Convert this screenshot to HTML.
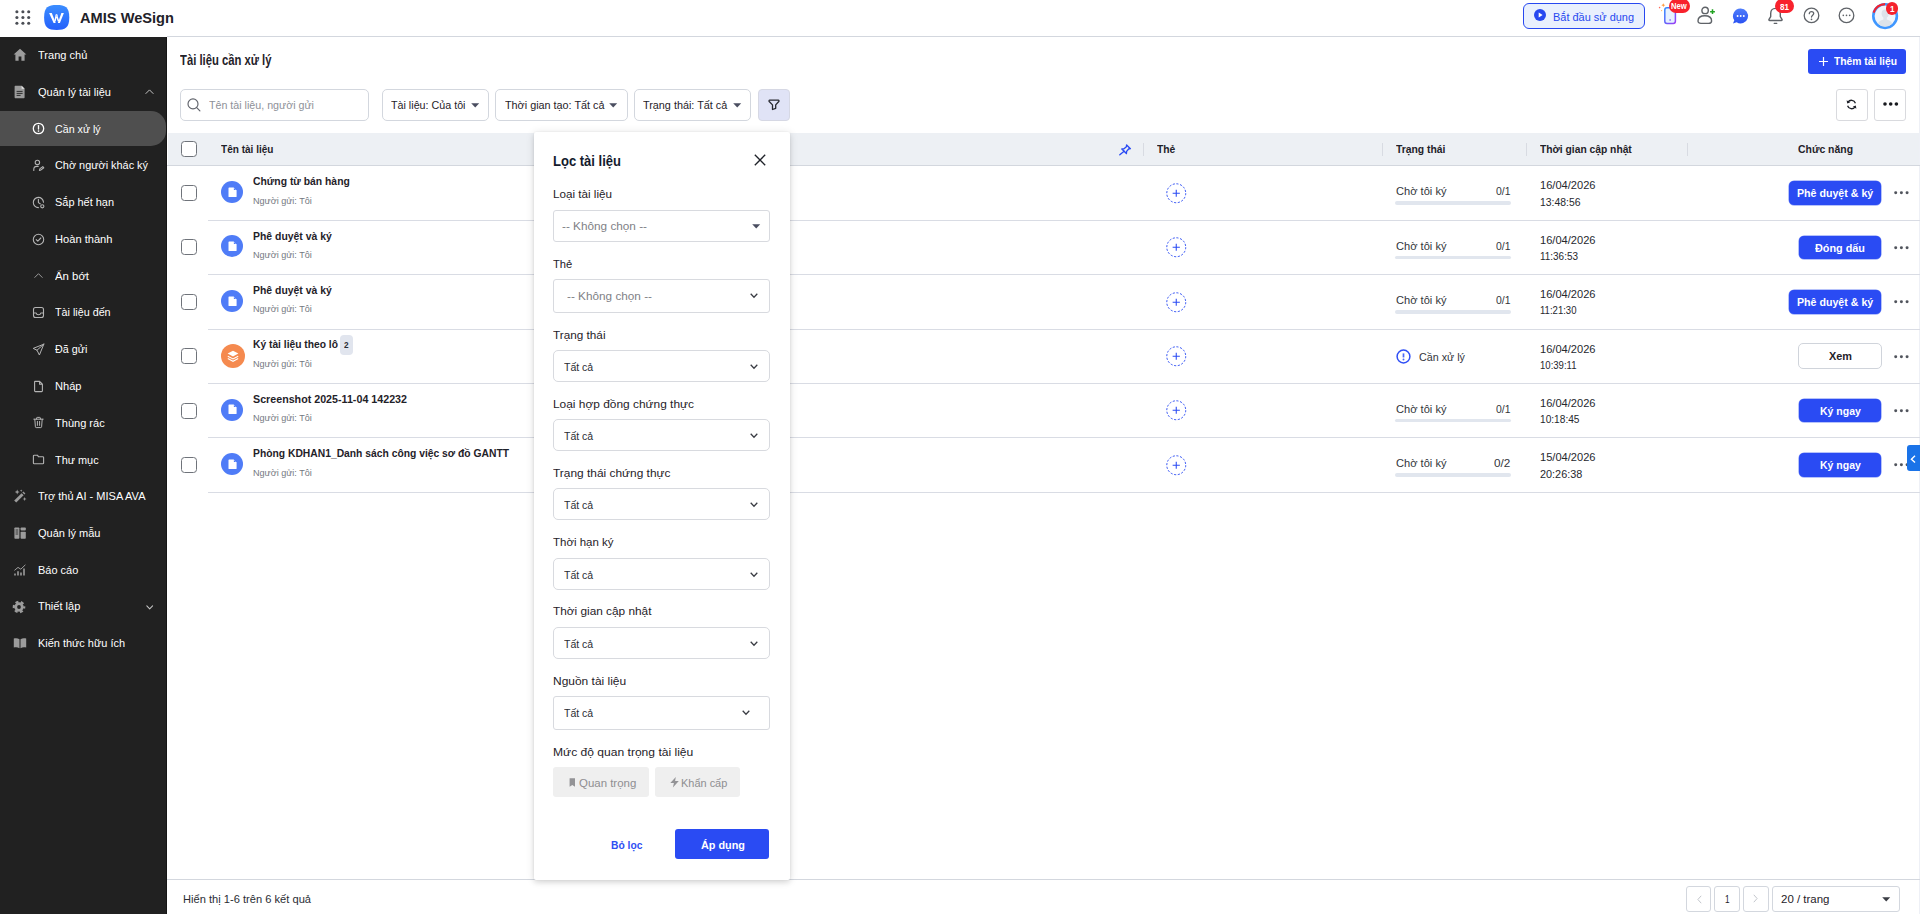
<!DOCTYPE html>
<html lang="vi">
<head>
<meta charset="utf-8">
<title>AMIS WeSign - Tài liệu cần xử lý</title>
<style>
*{box-sizing:border-box;margin:0;padding:0}
html,body{width:1920px;height:914px;overflow:hidden;background:#fff}
body{font-family:"Liberation Sans",sans-serif;font-size:12px;color:#1f2229;position:relative}
.t{position:absolute;white-space:nowrap;transform-origin:0 50%;display:block}
svg{display:block;overflow:visible}
</style>
</head>
<body>
<!-- header -->
<svg style="position:absolute;left:14.50px;top:10.00px;" width="16" height="15" viewBox="0 0 16 15"><g fill="#4b4e55"><circle cx="1.9" cy="1.8" r="1.55"/><circle cx="7.9" cy="1.8" r="1.55"/><circle cx="13.7" cy="1.8" r="1.55"/><circle cx="1.9" cy="7.5" r="1.55"/><circle cx="7.9" cy="7.5" r="1.55"/><circle cx="13.7" cy="7.5" r="1.55"/><circle cx="1.9" cy="13.2" r="1.55"/><circle cx="7.9" cy="13.2" r="1.55"/><circle cx="13.7" cy="13.2" r="1.55"/></g></svg>
<svg style="position:absolute;left:44.10px;top:4.90px;" width="25.4" height="25" viewBox="0 0 25.4 25"><defs><linearGradient id="lg" x1="0" y1="0" x2="0" y2="1"><stop offset="0" stop-color="#3b8dff"/><stop offset="1" stop-color="#2560fb"/></linearGradient></defs><path d="M12.7 0.1C21.2 0.1 25.3 2.2 25.3 12.5C25.3 22.8 21.2 24.9 12.7 24.9C4.2 24.9 0.1 22.8 0.1 12.5C0.1 2.2 4.2 0.1 12.7 0.1Z" fill="url(#lg)"/><path d="M5.1 8.1H7.8L11.7 17.9H9.6Z" fill="#fff"/><path d="M17.4 8.1H19.9L15.9 17.9H13.8Z" fill="#fff"/><path d="M10.9 16.4L12.4 9.8L14.5 16.2" fill="none" stroke="#fff" stroke-width="1.5" stroke-linejoin="round"/><ellipse cx="12.6" cy="10.6" rx="1" ry="1.5" fill="#cfe0ff"/></svg>
<span class="t" style="left:80.00px;top:9.80px;font-size:15px;line-height:16px;font-weight:bold;color:#1f2229;transform:scaleX(0.9750);">AMIS WeSign</span>
<div style="position:absolute;left:1523.00px;top:3.00px;width:122.00px;height:26.00px;border:1px solid #2748f0;background:#e9f0fd;border-radius:6px;"></div>
<svg style="position:absolute;left:1534.00px;top:9.30px;" width="12" height="12" viewBox="0 0 12 12"><circle cx="6" cy="6" r="6" fill="#2748f0"/><path d="M4.7 3.6L8.6 6L4.7 8.4Z" fill="#fff"/></svg>
<span class="t" style="left:1553.00px;top:8.80px;font-size:11.5px;line-height:16px;color:#2748f0;transform:scaleX(0.9521);">Bắt đầu sử dụng</span>
<svg style="position:absolute;left:1657.00px;top:2.00px;" width="22" height="23" viewBox="0 0 22 23"><defs><linearGradient id="pg" x1="0" y1="0" x2="1" y2="1"><stop offset="0" stop-color="#2f8bff"/><stop offset="1" stop-color="#9a3df5"/></linearGradient></defs><rect x="7.8" y="5.8" width="10.6" height="15.6" rx="2.2" fill="#e7f2ff" stroke="url(#pg)" stroke-width="1.5"/><circle cx="13.1" cy="18" r="0.8" fill="#5b4ff5"/><path d="M6.3 1.2L6.9 2.6L8.3 3.2L6.9 3.8L6.3 5.2L5.7 3.8L4.3 3.2L5.7 2.6Z" fill="#ff9a3d"/><circle cx="2.6" cy="5.6" r="0.8" fill="#ff6a5a"/><circle cx="4.6" cy="8.6" r="0.6" fill="#ffb45a"/></svg>
<div style="position:absolute;left:1669.00px;top:-1.00px;width:21.00px;height:14.00px;background:#f8222d;border-radius:7px;"></div>
<span class="t" style="left:1671.30px;top:0.30px;font-size:9.5px;line-height:12px;font-weight:bold;color:#fff;transform:scaleX(0.8083);">New</span>
<svg style="position:absolute;left:1696.00px;top:6.00px;" width="21" height="19" viewBox="0 0 21 19"><circle cx="9.1" cy="4.4" r="3.2" fill="none" stroke="#5f6368" stroke-width="1.4"/><path d="M2 15C2 11.4 4.9 9.8 8.8 9.8C12.7 9.8 15.6 11.4 15.6 15C15.6 16.6 14.4 17.4 12.6 17.4H5C3.2 17.4 2 16.6 2 15Z" fill="none" stroke="#5f6368" stroke-width="1.4"/><path d="M16.5 3.3V8.1M14.1 5.7H18.9" stroke="#22a322" stroke-width="1.5" fill="none"/></svg>
<svg style="position:absolute;left:1732.00px;top:7.50px;" width="17" height="17" viewBox="0 0 17 17"><defs><linearGradient id="cg" x1="0" y1="0" x2="0" y2="1"><stop offset="0" stop-color="#4f7dfb"/><stop offset="1" stop-color="#2a52f2"/></linearGradient></defs><path d="M8.7 0.6A7.4 7.4 0 1 1 4.6 14.2L1 15.6L2.3 12.2A7.4 7.4 0 0 1 8.7 0.6Z" fill="url(#cg)"/><circle cx="5.6" cy="8" r="0.95" fill="#fff"/><circle cx="8.7" cy="8" r="0.95" fill="#fff"/><circle cx="11.8" cy="8" r="0.95" fill="#fff"/></svg>
<svg style="position:absolute;left:1767.00px;top:7.00px;" width="17" height="18" viewBox="0 0 17 18"><path d="M8.5 1.4C5.6 1.4 3.7 3.6 3.7 6.4V9.6L2 12.3C1.7 12.9 2 13.5 2.7 13.5H14.3C15 13.5 15.3 12.9 15 12.3L13.3 9.6V6.4C13.3 3.6 11.4 1.4 8.5 1.4Z" fill="none" stroke="#5f6368" stroke-width="1.4" stroke-linejoin="round"/><path d="M7.2 16.3H9.8" fill="none" stroke="#5f6368" stroke-width="1.3" stroke-linecap="round"/></svg>
<div style="position:absolute;left:1775.00px;top:-1.00px;width:19.20px;height:14.00px;background:#f8222d;border-radius:7px;"></div>
<span class="t" style="left:1780.00px;top:0.50px;font-size:9px;line-height:12px;font-weight:bold;color:#fff;transform:scaleX(0.8986);">81</span>
<svg style="position:absolute;left:1803.00px;top:7.00px;" width="17" height="17" viewBox="0 0 17 17"><circle cx="8.5" cy="8.4" r="7.3" fill="none" stroke="#5f6368" stroke-width="1.3"/><path d="M6.3 6.7C6.3 5.4 7.2 4.6 8.5 4.6C9.8 4.6 10.7 5.4 10.7 6.5C10.7 8.2 8.5 8.2 8.5 10.1" fill="none" stroke="#5f6368" stroke-width="1.3" stroke-linecap="round"/><circle cx="8.5" cy="12.3" r="0.85" fill="#5f6368"/></svg>
<svg style="position:absolute;left:1838.00px;top:7.00px;" width="17" height="17" viewBox="0 0 17 17"><circle cx="8.5" cy="8.4" r="7.3" fill="none" stroke="#5f6368" stroke-width="1.3"/><circle cx="5.3" cy="8.4" r="0.8" fill="#5f6368"/><circle cx="8.5" cy="8.4" r="0.8" fill="#5f6368"/><circle cx="11.7" cy="8.4" r="0.8" fill="#5f6368"/></svg>
<svg style="position:absolute;left:1871.90px;top:2.90px;" width="26.2" height="26.2" viewBox="0 0 26.2 26.2"><defs><clipPath id="av"><circle cx="13.1" cy="13.1" r="10.6"/></clipPath></defs><circle cx="13.1" cy="13.1" r="11.8" fill="#f1f5f9" stroke="#3f97ff" stroke-width="2.6"/><path d="M1.6 9.6A12 12 0 0 1 13.1 1.1" fill="none" stroke="#f5222d" stroke-width="2.2"/><g clip-path="url(#av)" fill="#dde3ea"><ellipse cx="13.2" cy="10.6" rx="3.6" ry="4.2"/><path d="M5.2 24C5.6 18.6 8.6 16.4 13.1 16.4C17.6 16.4 20.6 18.6 21 24Z"/><rect x="11.4" y="13.6" width="3.4" height="4"/></g></svg>
<div style="position:absolute;left:1885.70px;top:2.20px;width:12.50px;height:12.50px;background:#f5222d;border-radius:50%;"></div>
<span class="t" style="left:1889.60px;top:2.60px;font-size:9.5px;line-height:12px;font-weight:bold;color:#fff;transform:scaleX(0.8684);">1</span>
<!-- sidebar -->
<div style="position:absolute;left:0.00px;top:37.00px;width:167.00px;height:877.00px;background:#212121;"></div>
<div style="position:absolute;left:166.00px;top:37.00px;width:1.00px;height:877.00px;background:#151515;"></div>
<div style="position:absolute;left:0.00px;top:111.00px;width:166.00px;height:35.00px;background:#4f4f4f;border-radius:0 15px 15px 0;"></div>
<span class="t" style="left:38.00px;top:47.00px;font-size:11.2px;line-height:16px;color:#fff;transform:scaleX(0.9866);">Trang chủ</span>
<span class="t" style="left:38.00px;top:83.76px;font-size:11.2px;line-height:16px;color:#fff;transform:scaleX(0.9863);">Quản lý tài liệu</span>
<span class="t" style="left:38.00px;top:488.12px;font-size:11.2px;line-height:16px;color:#fff;transform:scaleX(0.9854);">Trợ thủ AI - MISA AVA</span>
<span class="t" style="left:38.00px;top:524.88px;font-size:11.2px;line-height:16px;color:#fff;transform:scaleX(0.9852);">Quản lý mẫu</span>
<span class="t" style="left:38.00px;top:561.64px;font-size:11.2px;line-height:16px;color:#fff;transform:scaleX(0.9814);">Báo cáo</span>
<span class="t" style="left:38.00px;top:598.40px;font-size:11.2px;line-height:16px;color:#fff;transform:scaleX(0.9855);">Thiết lập</span>
<span class="t" style="left:38.00px;top:635.16px;font-size:11.2px;line-height:16px;color:#fff;transform:scaleX(0.9775);">Kiến thức hữu ích</span>
<span class="t" style="left:54.80px;top:121.07px;font-size:11.2px;line-height:16px;color:#fff;transform:scaleX(0.9539);">Cần xử lý</span>
<span class="t" style="left:54.80px;top:157.23px;font-size:11.2px;line-height:16px;color:#fff;transform:scaleX(0.9733);">Chờ người khác ký</span>
<span class="t" style="left:54.80px;top:193.99px;font-size:11.2px;line-height:16px;color:#fff;transform:scaleX(0.9777);">Sắp hết hạn</span>
<span class="t" style="left:54.80px;top:230.75px;font-size:11.2px;line-height:16px;color:#fff;transform:scaleX(0.9938);">Hoàn thành</span>
<span class="t" style="left:54.80px;top:267.51px;font-size:11.2px;line-height:16px;color:#fff;transform:scaleX(1.0159);">Ẩn bớt</span>
<span class="t" style="left:54.80px;top:304.27px;font-size:11.2px;line-height:16px;color:#fff;transform:scaleX(0.9612);">Tài liệu đến</span>
<span class="t" style="left:54.80px;top:341.03px;font-size:11.2px;line-height:16px;color:#fff;transform:scaleX(0.9610);">Đã gửi</span>
<span class="t" style="left:54.80px;top:377.79px;font-size:11.2px;line-height:16px;color:#fff;transform:scaleX(0.9907);">Nháp</span>
<span class="t" style="left:54.80px;top:414.55px;font-size:11.2px;line-height:16px;color:#fff;transform:scaleX(0.9866);">Thùng rác</span>
<span class="t" style="left:54.80px;top:451.91px;font-size:11.2px;line-height:16px;color:#fff;transform:scaleX(0.9733);">Thư mục</span>
<svg style="position:absolute;left:12.50px;top:48.30px;" width="14" height="14" viewBox="0 0 14 14"><path d="M7 0.8L13.4 6.6H11.6V12.8H8.4V8.6H5.6V12.8H2.4V6.6H0.6Z" fill="#9c9c9c"/></svg>
<svg style="position:absolute;left:12.50px;top:85.06px;" width="14" height="14" viewBox="0 0 14 14"><path d="M2.6 0.8H8.6L11.6 3.8V12.2C11.6 12.8 11.2 13.2 10.6 13.2H2.6C2 13.2 1.6 12.8 1.6 12.2V1.8C1.6 1.2 2 0.8 2.6 0.8Z" fill="#9c9c9c"/><path d="M8.6 0.8V3.8H11.6Z" fill="#e6e6e6"/><path d="M3.6 6.4H9.6M3.6 8.4H9.6M3.6 10.4H7.6" stroke="#212121" stroke-width="0.9"/></svg>
<svg style="position:absolute;left:12.50px;top:489.42px;" width="14" height="14" viewBox="0 0 14 14"><path d="M1.2 11.6L8.6 4.2L10.6 6.2L3.2 13.6Z" fill="#9c9c9c"/><path d="M9.4 3.4L10.4 2.4L12.4 4.4L11.4 5.4Z" fill="#9c9c9c"/><path d="M4.2 0.6L4.9 2.3L6.6 3L4.9 3.7L4.2 5.4L3.5 3.7L1.8 3L3.5 2.3Z" fill="#9c9c9c"/><path d="M11.6 8L12.2 9.4L13.6 10L12.2 10.6L11.6 12L11 10.6L9.6 10L11 9.4Z" fill="#9c9c9c"/><path d="M8.2 0.4L8.6 1.3L9.5 1.7L8.6 2.1L8.2 3L7.8 2.1L6.9 1.7L7.8 1.3Z" fill="#9c9c9c"/></svg>
<svg style="position:absolute;left:12.50px;top:526.18px;" width="14" height="14" viewBox="0 0 14 14"><rect x="1.4" y="1.4" width="5" height="11.4" rx="0.8" fill="#9c9c9c"/><rect x="7.6" y="1.4" width="5.2" height="3.2" rx="0.8" fill="#9c9c9c"/><rect x="7.6" y="5.8" width="5.2" height="7" rx="0.8" fill="#9c9c9c"/><path d="M2.6 4H5.2M2.6 6H5.2M2.6 8H5.2" stroke="#212121" stroke-width="0.8"/></svg>
<svg style="position:absolute;left:12.50px;top:562.94px;" width="14" height="14" viewBox="0 0 14 14"><path d="M2 12.6V10.4M5 12.6V8.2M8 12.6V9.4M11 12.6V5.6" stroke="#9c9c9c" stroke-width="1.6"/><path d="M1.4 7.4L5 4.4L7.8 6.2L12.4 1.8" fill="none" stroke="#9c9c9c" stroke-width="1"/></svg>
<svg style="position:absolute;left:12.10px;top:599.70px;" width="14" height="14" viewBox="0 0 14 14"><circle cx="7" cy="7" r="4.7" fill="#9c9c9c"/><circle cx="7" cy="7" r="5.2" fill="none" stroke="#9c9c9c" stroke-width="2.2" stroke-dasharray="2.9 2.545" stroke-dashoffset="1.45"/><circle cx="7" cy="7" r="1.9" fill="#212121"/></svg>
<svg style="position:absolute;left:12.50px;top:636.46px;" width="14" height="14" viewBox="0 0 14 14"><path d="M0.8 2.6C2.8 2 4.8 2.2 6.5 3.2V12.2C4.8 11.2 2.8 11 0.8 11.6Z" fill="#9c9c9c"/><path d="M13.2 2.6C11.2 2 9.2 2.2 7.5 3.2V12.2C9.2 11.2 11.2 11 13.2 11.6Z" fill="#9c9c9c"/></svg>
<svg style="position:absolute;left:145.40px;top:89.06px;" width="9" height="5.4" viewBox="0 0 10 6"><g fill="none" stroke="#c4c4c4" stroke-width="1.1" stroke-linecap="round" stroke-linejoin="round"><path d="M1 5L5 1L9 5"/></g></svg>
<svg style="position:absolute;left:146.00px;top:604.50px;" width="7.4" height="5" viewBox="0 0 9 6"><g fill="none" stroke="#c4c4c4" stroke-width="1.3" stroke-linecap="round" stroke-linejoin="round"><path d="M1 1L4.5 4.6L8 1"/></g></svg>
<svg style="position:absolute;left:32.00px;top:122.32px;" width="13" height="13" viewBox="0 0 13 13"><g fill="none" stroke="#fff" stroke-width="1.3" stroke-linecap="round" stroke-linejoin="round"><circle cx="6.5" cy="6.5" r="5.2"/><path d="M6.5 3.6V7"/></g><circle cx="6.5" cy="9.1" r="0.8" fill="#fff"/></svg>
<svg style="position:absolute;left:32.00px;top:159.08px;" width="13" height="13" viewBox="0 0 13 13"><g fill="none" stroke="#b4b4b4" stroke-width="1.1" stroke-linecap="round" stroke-linejoin="round"><circle cx="5.4" cy="3.4" r="2.2"/><path d="M1.8 11.4V10.2C1.8 8.4 3.2 7.4 5 7.4H6.2"/><path d="M7.4 11.4L8 9.6L10.8 7.6L11.8 8.8L9 10.9Z"/></g></svg>
<svg style="position:absolute;left:32.00px;top:195.84px;" width="13" height="13" viewBox="0 0 13 13"><g fill="none" stroke="#b4b4b4" stroke-width="1.1" stroke-linecap="round" stroke-linejoin="round"><path d="M11.5 6.2A5.1 5.1 0 1 0 6.4 11.6"/><path d="M6.4 3.4V6.6L8.2 7.8"/><circle cx="10.3" cy="10.3" r="1.6"/></g></svg>
<svg style="position:absolute;left:32.00px;top:232.60px;" width="13" height="13" viewBox="0 0 13 13"><g fill="none" stroke="#b4b4b4" stroke-width="1.1" stroke-linecap="round" stroke-linejoin="round"><circle cx="6.5" cy="6.5" r="5.2"/><path d="M4.2 6.6L5.8 8.2L8.8 5"/></g></svg>
<svg style="position:absolute;left:32.00px;top:269.36px;" width="13" height="13" viewBox="0 0 13 13"><g fill="none" stroke="#9a9a9a" stroke-width="1.0" stroke-linecap="round" stroke-linejoin="round"><path d="M2.8 8.4L6.5 4.7L10.2 8.4"/></g></svg>
<svg style="position:absolute;left:32.00px;top:306.12px;" width="13" height="13" viewBox="0 0 13 13"><g fill="none" stroke="#b4b4b4" stroke-width="1.1" stroke-linecap="round" stroke-linejoin="round"><rect x="1.5" y="1.5" width="10" height="10" rx="2"/><path d="M1.5 7H4.2C4.4 8.2 5.3 8.8 6.5 8.8C7.7 8.8 8.6 8.2 8.8 7H11.5"/></g></svg>
<svg style="position:absolute;left:32.00px;top:342.88px;" width="13" height="13" viewBox="0 0 13 13"><g fill="none" stroke="#b4b4b4" stroke-width="1.0" stroke-linecap="round" stroke-linejoin="round"><path d="M11.8 1.2L1.2 5.4L5 7.2L7.4 12L11.8 1.2ZM5 7.2L11.8 1.2"/></g></svg>
<svg style="position:absolute;left:32.00px;top:379.64px;" width="13" height="13" viewBox="0 0 13 13"><g fill="none" stroke="#b4b4b4" stroke-width="1.1" stroke-linecap="round" stroke-linejoin="round"><path d="M3 1.4H7.6L10.4 4.2V10.8C10.4 11.3 10 11.6 9.6 11.6H3.4C2.9 11.6 2.6 11.3 2.6 10.8V1.8C2.6 1.6 2.8 1.4 3 1.4ZM7.6 1.4V4.2H10.4"/></g></svg>
<svg style="position:absolute;left:32.00px;top:416.40px;" width="13" height="13" viewBox="0 0 13 13"><g fill="none" stroke="#b4b4b4" stroke-width="1.0" stroke-linecap="round" stroke-linejoin="round"><path d="M1.8 3.2H11.2M4.6 3.2V2C4.6 1.6 4.9 1.4 5.2 1.4H7.8C8.1 1.4 8.4 1.6 8.4 2V3.2M2.8 3.2L3.4 10.8C3.4 11.3 3.8 11.6 4.2 11.6H8.8C9.2 11.6 9.6 11.3 9.6 10.8L10.2 3.2M5.4 5.4V9.4M7.6 5.4V9.4"/></g></svg>
<svg style="position:absolute;left:32.00px;top:453.16px;" width="13" height="13" viewBox="0 0 13 13"><g fill="none" stroke="#b4b4b4" stroke-width="1.1" stroke-linecap="round" stroke-linejoin="round"><path d="M1.4 3V10C1.4 10.5 1.8 10.8 2.2 10.8H10.8C11.2 10.8 11.6 10.5 11.6 10V4.6C11.6 4.1 11.2 3.8 10.8 3.8H6.6L5.4 2.2H2.2C1.8 2.2 1.4 2.5 1.4 3Z"/></g></svg>
<!-- toolbar -->
<div style="position:absolute;left:167.00px;top:36.00px;width:1753.00px;height:1.00px;background:#d3d7de;"></div>
<span class="t" style="left:180.00px;top:51.00px;font-size:14px;line-height:18px;font-weight:bold;color:#1f2229;transform:scaleX(0.8052);">Tài liệu cần xử lý</span>
<div style="position:absolute;left:1808.00px;top:49.00px;width:98.00px;height:25.00px;background:#2a4bf3;border-radius:3px;"></div>
<svg style="position:absolute;left:1819.00px;top:56.80px;" width="9" height="9" viewBox="0 0 9 9"><path d="M4.5 0V9M0 4.5H9" stroke="#fff" stroke-width="1.2"/></svg>
<span class="t" style="left:1833.60px;top:53.40px;font-size:11.2px;line-height:16px;font-weight:bold;color:#fff;transform:scaleX(0.9212);">Thêm tài liệu</span>
<div style="position:absolute;left:180.00px;top:89.00px;width:189.00px;height:32.00px;border:1px solid #d3d7de;border-radius:5px;background:#fff;"></div>
<svg style="position:absolute;left:186.70px;top:97.60px;" width="14" height="14" viewBox="0 0 14 14"><circle cx="6" cy="5.9" r="5" fill="none" stroke="#60636b" stroke-width="1.15"/><path d="M9.7 9.6L12.9 12.8" stroke="#60636b" stroke-width="1.2" stroke-linecap="round"/></svg>
<span class="t" style="left:208.70px;top:97.20px;font-size:11px;line-height:16px;color:#8e9198;transform:scaleX(0.9707);">Tên tài liệu, người gửi</span>
<div style="position:absolute;left:382.00px;top:89.00px;width:107.00px;height:32.00px;border:1px solid #d3d7de;border-radius:5px;background:#fff;"></div>
<span class="t" style="left:391.00px;top:96.90px;font-size:11.2px;line-height:16px;color:#1f2229;transform:scaleX(0.9584);">Tài liệu: Của tôi</span>
<svg style="position:absolute;left:471.20px;top:102.60px;" width="8.4" height="4.7" viewBox="0 0 8 4.4"><path d="M0.2 0.1H7.8L4 4.3Z" fill="#4a4e60"/></svg>
<div style="position:absolute;left:495.00px;top:89.00px;width:133.00px;height:32.00px;border:1px solid #d3d7de;border-radius:5px;background:#fff;"></div>
<span class="t" style="left:504.50px;top:96.90px;font-size:11.2px;line-height:16px;color:#1f2229;transform:scaleX(0.9669);">Thời gian tạo: Tất cả</span>
<svg style="position:absolute;left:609.20px;top:102.60px;" width="8.4" height="4.7" viewBox="0 0 8 4.4"><path d="M0.2 0.1H7.8L4 4.3Z" fill="#4a4e60"/></svg>
<div style="position:absolute;left:634.30px;top:89.00px;width:116.50px;height:32.00px;border:1px solid #d3d7de;border-radius:5px;background:#fff;"></div>
<span class="t" style="left:643.20px;top:96.90px;font-size:11.2px;line-height:16px;color:#1f2229;transform:scaleX(0.9683);">Trạng thái: Tất cả</span>
<svg style="position:absolute;left:732.90px;top:102.60px;" width="8.4" height="4.7" viewBox="0 0 8 4.4"><path d="M0.2 0.1H7.8L4 4.3Z" fill="#4a4e60"/></svg>
<div style="position:absolute;left:758.00px;top:89.00px;width:32.00px;height:32.00px;background:#e0e3f6;border:1px solid #d6d8e4;border-radius:4px;"></div>
<svg style="position:absolute;left:767.50px;top:99.00px;" width="12" height="12" viewBox="0 0 12 12"><path d="M1.7 1.2H10.3C11 1.2 11.2 2 10.8 2.5L7.7 5.9V9.3L4.5 10.5V5.9L1.2 2.5C0.8 2 1 1.2 1.7 1.2Z" fill="none" stroke="#26282e" stroke-width="1.3" stroke-linejoin="round"/></svg>
<div style="position:absolute;left:1836.00px;top:89.00px;width:32.00px;height:32.00px;border:1px solid #d9dade;border-radius:3px;background:#fff;"></div>
<svg style="position:absolute;left:1846.40px;top:98.50px;" width="11" height="11" viewBox="0 0 11 11"><g fill="none" stroke="#1f2229" stroke-width="1.3"><path d="M9.4 4.2A4.1 4.1 0 0 0 2 3.2"/><path d="M1.6 6.8A4.1 4.1 0 0 0 9 7.8"/></g><path d="M0.6 1.2L1.2 4.4L4.2 3.6Z" fill="#1f2229"/><path d="M10.4 9.8L9.8 6.6L6.8 7.4Z" fill="#1f2229"/></svg>
<div style="position:absolute;left:1874.00px;top:89.00px;width:32.00px;height:32.00px;border:1px solid #d9dade;border-radius:3px;background:#fff;"></div>
<svg style="position:absolute;left:1883.00px;top:102.40px;" width="15.4" height="4.0" viewBox="0 0 15.4 4.0"><circle cx="2.0" cy="2.0" r="1.8" fill="#17191e"/><circle cx="7.7" cy="2.0" r="1.8" fill="#17191e"/><circle cx="13.4" cy="2.0" r="1.8" fill="#17191e"/></svg>
<!-- table -->
<div style="position:absolute;left:168.00px;top:133.00px;width:1751.00px;height:32.00px;background:#edf0f4;"></div>
<div style="position:absolute;left:1919.00px;top:37.00px;width:1.00px;height:877.00px;background:#eef0f6;"></div>
<div style="position:absolute;left:167.00px;top:165.00px;width:1753.00px;height:1.00px;background:#d3d7de;"></div>
<div style="position:absolute;left:181.00px;top:141.00px;width:16.00px;height:16.00px;border:1.2px solid #6f737a;border-radius:3.5px;background:#fff;"></div>
<span class="t" style="left:221.00px;top:141.40px;font-size:11.2px;line-height:16px;font-weight:bold;color:#1f2229;transform:scaleX(0.8984);">Tên tài liệu</span>
<span class="t" style="left:1157.00px;top:141.40px;font-size:11.2px;line-height:16px;font-weight:bold;color:#1f2229;transform:scaleX(0.9200);">Thẻ</span>
<span class="t" style="left:1395.50px;top:141.40px;font-size:11.2px;line-height:16px;font-weight:bold;color:#1f2229;transform:scaleX(0.9258);">Trạng thái</span>
<span class="t" style="left:1539.50px;top:141.40px;font-size:11.2px;line-height:16px;font-weight:bold;color:#1f2229;transform:scaleX(0.9184);">Thời gian cập nhật</span>
<span class="t" style="left:1797.50px;top:141.40px;font-size:11.2px;line-height:16px;font-weight:bold;color:#1f2229;transform:scaleX(0.9310);">Chức năng</span>
<div style="position:absolute;left:1143.00px;top:142.50px;width:1.00px;height:13.00px;background:#d8dbe2;"></div>
<div style="position:absolute;left:1382.00px;top:142.50px;width:1.00px;height:13.00px;background:#d8dbe2;"></div>
<div style="position:absolute;left:1526.20px;top:142.50px;width:1.00px;height:13.00px;background:#d8dbe2;"></div>
<div style="position:absolute;left:1687.00px;top:142.50px;width:1.00px;height:13.00px;background:#d8dbe2;"></div>
<svg style="position:absolute;left:1118.50px;top:144.00px;" width="12.5" height="11.5" viewBox="0 0 12.5 11.5"><g fill="none" stroke="#2a4bf3" stroke-width="1.35" stroke-linejoin="round" stroke-linecap="round"><path d="M7.6 0.9L11.4 4.7L9.6 5L7.6 7.4L7.4 9.6L2.8 5L5 4.8L7.4 2.8Z"/><path d="M5.1 7.3L0.8 10.8"/></g></svg>
<div style="position:absolute;left:208.00px;top:220.00px;width:1712.00px;height:1.00px;background:#d9dce4;"></div>
<div style="position:absolute;left:181.00px;top:185.00px;width:16.00px;height:16.00px;border:1.2px solid #6f737a;border-radius:3.5px;background:#fff;"></div>
<div style="position:absolute;left:221.00px;top:181.00px;width:22.00px;height:22.00px;background:#4f7cf7;border-radius:50%;"></div>
<svg style="position:absolute;left:227.50px;top:186.80px;" width="9" height="10.5" viewBox="0 0 9 10.5"><path d="M1.2 0.4H5.6L8.6 3.4V9.4C8.6 9.8 8.3 10.1 7.9 10.1H1.2C0.8 10.1 0.5 9.8 0.5 9.4V1.1C0.5 0.7 0.8 0.4 1.2 0.4Z" fill="#fff"/><path d="M5.9 0.9V3.1H8.1Z" fill="#4f7cf7"/></svg>
<span class="t" style="left:252.80px;top:173.10px;font-size:11.8px;line-height:16px;font-weight:bold;color:#1f2229;transform:scaleX(0.8789);">Chứng từ bán hàng</span>
<span class="t" style="left:252.80px;top:193.60px;font-size:9.8px;line-height:14px;color:#747881;transform:scaleX(0.9264);">Người gửi: Tôi</span>
<svg style="position:absolute;left:1165.70px;top:182.70px;" width="20.5" height="20.5" viewBox="0 0 21 21"><circle cx="10.5" cy="10.5" r="9.7" fill="none" stroke="#2a4bf3" stroke-width="1" stroke-dasharray="2.1 1.7"/><path d="M10.5 6.8V14.2M6.8 10.5H14.2" stroke="#2a4bf3" stroke-width="1.1"/></svg>
<span class="t" style="left:1395.50px;top:183.10px;font-size:11.5px;line-height:16px;color:#33363c;transform:scaleX(0.9659);">Chờ tôi ký</span>
<span class="t" style="left:1496.00px;top:183.40px;font-size:11px;line-height:16px;color:#33363c;transform:scaleX(0.9479);">0/1</span>
<div style="position:absolute;left:1395.00px;top:201.30px;width:116.00px;height:3.60px;background:#e1e6ee;border-radius:2px;"></div>
<span class="t" style="left:1539.50px;top:177.40px;font-size:11px;line-height:16px;color:#26282e;transform:scaleX(1.0079);">16/04/2026</span>
<span class="t" style="left:1539.50px;top:193.50px;font-size:11px;line-height:16px;color:#26282e;transform:scaleX(0.9456);">13:48:56</span>
<div style="position:absolute;left:1789.00px;top:181.00px;width:92.30px;height:24.00px;background:#2a4bf3;border-radius:5px;box-shadow:0 0 0 0.5px #6f86f5;"></div>
<span class="t" style="left:1797.00px;top:185.10px;font-size:11.2px;line-height:16px;font-weight:bold;color:#fff;transform:scaleX(0.9501);">Phê duyệt &amp; ký</span>
<svg style="position:absolute;left:1894.20px;top:190.80px;" width="14.8" height="3.4" viewBox="0 0 14.8 3.4"><circle cx="1.7" cy="1.7" r="1.5" fill="#50545c"/><circle cx="7.4" cy="1.7" r="1.5" fill="#50545c"/><circle cx="13.1" cy="1.7" r="1.5" fill="#50545c"/></svg>
<div style="position:absolute;left:208.00px;top:274.00px;width:1712.00px;height:1.00px;background:#d9dce4;"></div>
<div style="position:absolute;left:181.00px;top:239.40px;width:16.00px;height:16.00px;border:1.2px solid #6f737a;border-radius:3.5px;background:#fff;"></div>
<div style="position:absolute;left:221.00px;top:235.40px;width:22.00px;height:22.00px;background:#4f7cf7;border-radius:50%;"></div>
<svg style="position:absolute;left:227.50px;top:241.20px;" width="9" height="10.5" viewBox="0 0 9 10.5"><path d="M1.2 0.4H5.6L8.6 3.4V9.4C8.6 9.8 8.3 10.1 7.9 10.1H1.2C0.8 10.1 0.5 9.8 0.5 9.4V1.1C0.5 0.7 0.8 0.4 1.2 0.4Z" fill="#fff"/><path d="M5.9 0.9V3.1H8.1Z" fill="#4f7cf7"/></svg>
<span class="t" style="left:252.80px;top:227.50px;font-size:11.8px;line-height:16px;font-weight:bold;color:#1f2229;transform:scaleX(0.8835);">Phê duyệt và ký</span>
<span class="t" style="left:252.80px;top:248.00px;font-size:9.8px;line-height:14px;color:#747881;transform:scaleX(0.9264);">Người gửi: Tôi</span>
<svg style="position:absolute;left:1165.70px;top:237.10px;" width="20.5" height="20.5" viewBox="0 0 21 21"><circle cx="10.5" cy="10.5" r="9.7" fill="none" stroke="#2a4bf3" stroke-width="1" stroke-dasharray="2.1 1.7"/><path d="M10.5 6.8V14.2M6.8 10.5H14.2" stroke="#2a4bf3" stroke-width="1.1"/></svg>
<span class="t" style="left:1395.50px;top:237.50px;font-size:11.5px;line-height:16px;color:#33363c;transform:scaleX(0.9659);">Chờ tôi ký</span>
<span class="t" style="left:1496.00px;top:237.80px;font-size:11px;line-height:16px;color:#33363c;transform:scaleX(0.9479);">0/1</span>
<div style="position:absolute;left:1395.00px;top:255.70px;width:116.00px;height:3.60px;background:#e1e6ee;border-radius:2px;"></div>
<span class="t" style="left:1539.50px;top:231.80px;font-size:11px;line-height:16px;color:#26282e;transform:scaleX(1.0079);">16/04/2026</span>
<span class="t" style="left:1539.50px;top:247.90px;font-size:11px;line-height:16px;color:#26282e;transform:scaleX(0.9044);">11:36:53</span>
<div style="position:absolute;left:1799.00px;top:236.00px;width:82.30px;height:23.00px;background:#2a4bf3;border-radius:5px;box-shadow:0 0 0 0.5px #6f86f5;"></div>
<span class="t" style="left:1815.00px;top:239.50px;font-size:11.2px;line-height:16px;font-weight:bold;color:#fff;transform:scaleX(0.9691);">Đóng dấu</span>
<svg style="position:absolute;left:1894.20px;top:245.70px;" width="14.8" height="3.4" viewBox="0 0 14.8 3.4"><circle cx="1.7" cy="1.7" r="1.5" fill="#50545c"/><circle cx="7.4" cy="1.7" r="1.5" fill="#50545c"/><circle cx="13.1" cy="1.7" r="1.5" fill="#50545c"/></svg>
<div style="position:absolute;left:208.00px;top:329.00px;width:1712.00px;height:1.00px;background:#d9dce4;"></div>
<div style="position:absolute;left:181.00px;top:293.80px;width:16.00px;height:16.00px;border:1.2px solid #6f737a;border-radius:3.5px;background:#fff;"></div>
<div style="position:absolute;left:221.00px;top:289.80px;width:22.00px;height:22.00px;background:#4f7cf7;border-radius:50%;"></div>
<svg style="position:absolute;left:227.50px;top:295.60px;" width="9" height="10.5" viewBox="0 0 9 10.5"><path d="M1.2 0.4H5.6L8.6 3.4V9.4C8.6 9.8 8.3 10.1 7.9 10.1H1.2C0.8 10.1 0.5 9.8 0.5 9.4V1.1C0.5 0.7 0.8 0.4 1.2 0.4Z" fill="#fff"/><path d="M5.9 0.9V3.1H8.1Z" fill="#4f7cf7"/></svg>
<span class="t" style="left:252.80px;top:281.90px;font-size:11.8px;line-height:16px;font-weight:bold;color:#1f2229;transform:scaleX(0.8835);">Phê duyệt và ký</span>
<span class="t" style="left:252.80px;top:302.40px;font-size:9.8px;line-height:14px;color:#747881;transform:scaleX(0.9264);">Người gửi: Tôi</span>
<svg style="position:absolute;left:1165.70px;top:291.50px;" width="20.5" height="20.5" viewBox="0 0 21 21"><circle cx="10.5" cy="10.5" r="9.7" fill="none" stroke="#2a4bf3" stroke-width="1" stroke-dasharray="2.1 1.7"/><path d="M10.5 6.8V14.2M6.8 10.5H14.2" stroke="#2a4bf3" stroke-width="1.1"/></svg>
<span class="t" style="left:1395.50px;top:291.90px;font-size:11.5px;line-height:16px;color:#33363c;transform:scaleX(0.9659);">Chờ tôi ký</span>
<span class="t" style="left:1496.00px;top:292.20px;font-size:11px;line-height:16px;color:#33363c;transform:scaleX(0.9479);">0/1</span>
<div style="position:absolute;left:1395.00px;top:310.10px;width:116.00px;height:3.60px;background:#e1e6ee;border-radius:2px;"></div>
<span class="t" style="left:1539.50px;top:286.20px;font-size:11px;line-height:16px;color:#26282e;transform:scaleX(1.0079);">16/04/2026</span>
<span class="t" style="left:1539.50px;top:302.30px;font-size:11px;line-height:16px;color:#26282e;transform:scaleX(0.8687);">11:21:30</span>
<div style="position:absolute;left:1789.00px;top:290.00px;width:92.30px;height:24.00px;background:#2a4bf3;border-radius:5px;box-shadow:0 0 0 0.5px #6f86f5;"></div>
<span class="t" style="left:1797.00px;top:293.90px;font-size:11.2px;line-height:16px;font-weight:bold;color:#fff;transform:scaleX(0.9501);">Phê duyệt &amp; ký</span>
<svg style="position:absolute;left:1894.20px;top:299.80px;" width="14.8" height="3.4" viewBox="0 0 14.8 3.4"><circle cx="1.7" cy="1.7" r="1.5" fill="#50545c"/><circle cx="7.4" cy="1.7" r="1.5" fill="#50545c"/><circle cx="13.1" cy="1.7" r="1.5" fill="#50545c"/></svg>
<div style="position:absolute;left:208.00px;top:383.00px;width:1712.00px;height:1.00px;background:#d9dce4;"></div>
<div style="position:absolute;left:181.00px;top:348.20px;width:16.00px;height:16.00px;border:1.2px solid #6f737a;border-radius:3.5px;background:#fff;"></div>
<div style="position:absolute;left:220.80px;top:344.00px;width:24.40px;height:24.40px;background:#f58a4f;border-radius:50%;"></div>
<svg style="position:absolute;left:227.00px;top:349.60px;" width="12" height="13" viewBox="0 0 12 13"><path d="M6 0.8L11.4 3.6L6 6.4L0.6 3.6Z" fill="#fff"/><path d="M0.8 6.2L6 8.9L11.2 6.2M0.8 8.6L6 11.3L11.2 8.6" fill="none" stroke="#fff" stroke-width="1.1"/></svg>
<div style="position:absolute;left:340.20px;top:335.20px;width:12.60px;height:20.00px;background:#e1e5ee;border-radius:4px;"></div>
<span class="t" style="left:344.40px;top:338.90px;font-size:9.5px;line-height:12px;font-weight:bold;color:#2a2d34;transform:scaleX(0.8684);">2</span>
<span class="t" style="left:252.80px;top:336.30px;font-size:11.8px;line-height:16px;font-weight:bold;color:#1f2229;transform:scaleX(0.8703);">Ký tài liệu theo lô</span>
<span class="t" style="left:252.80px;top:356.80px;font-size:9.8px;line-height:14px;color:#747881;transform:scaleX(0.9264);">Người gửi: Tôi</span>
<svg style="position:absolute;left:1165.70px;top:345.90px;" width="20.5" height="20.5" viewBox="0 0 21 21"><circle cx="10.5" cy="10.5" r="9.7" fill="none" stroke="#2a4bf3" stroke-width="1" stroke-dasharray="2.1 1.7"/><path d="M10.5 6.8V14.2M6.8 10.5H14.2" stroke="#2a4bf3" stroke-width="1.1"/></svg>
<svg style="position:absolute;left:1395.60px;top:348.60px;" width="15" height="15" viewBox="0 0 15 15"><circle cx="7.5" cy="7.5" r="6.4" fill="none" stroke="#2f4ff5" stroke-width="1.5"/><path d="M7.5 4.4V8.4" stroke="#4a68fa" stroke-width="1.7"/><circle cx="7.5" cy="10.5" r="0.95" fill="#4a68fa"/></svg>
<span class="t" style="left:1419.20px;top:348.70px;font-size:11.5px;line-height:16px;color:#33363c;transform:scaleX(0.9340);">Cần xử lý</span>
<span class="t" style="left:1539.50px;top:340.60px;font-size:11px;line-height:16px;color:#26282e;transform:scaleX(1.0079);">16/04/2026</span>
<span class="t" style="left:1539.50px;top:356.70px;font-size:11px;line-height:16px;color:#26282e;transform:scaleX(0.8687);">10:39:11</span>
<div style="position:absolute;left:1798.20px;top:343.00px;width:83.50px;height:26.00px;background:#fff;border:1px solid #d0d4db;border-radius:5px;"></div>
<span class="t" style="left:1828.50px;top:348.30px;font-size:11.2px;line-height:16px;font-weight:bold;color:#1f2229;transform:scaleX(0.9729);">Xem</span>
<svg style="position:absolute;left:1894.20px;top:354.80px;" width="14.8" height="3.4" viewBox="0 0 14.8 3.4"><circle cx="1.7" cy="1.7" r="1.5" fill="#50545c"/><circle cx="7.4" cy="1.7" r="1.5" fill="#50545c"/><circle cx="13.1" cy="1.7" r="1.5" fill="#50545c"/></svg>
<div style="position:absolute;left:208.00px;top:437.00px;width:1712.00px;height:1.00px;background:#d9dce4;"></div>
<div style="position:absolute;left:181.00px;top:402.60px;width:16.00px;height:16.00px;border:1.2px solid #6f737a;border-radius:3.5px;background:#fff;"></div>
<div style="position:absolute;left:221.00px;top:398.60px;width:22.00px;height:22.00px;background:#4f7cf7;border-radius:50%;"></div>
<svg style="position:absolute;left:227.50px;top:404.40px;" width="9" height="10.5" viewBox="0 0 9 10.5"><path d="M1.2 0.4H5.6L8.6 3.4V9.4C8.6 9.8 8.3 10.1 7.9 10.1H1.2C0.8 10.1 0.5 9.8 0.5 9.4V1.1C0.5 0.7 0.8 0.4 1.2 0.4Z" fill="#fff"/><path d="M5.9 0.9V3.1H8.1Z" fill="#4f7cf7"/></svg>
<span class="t" style="left:252.80px;top:390.70px;font-size:11.8px;line-height:16px;font-weight:bold;color:#1f2229;transform:scaleX(0.9065);">Screenshot 2025-11-04 142232</span>
<span class="t" style="left:252.80px;top:411.20px;font-size:9.8px;line-height:14px;color:#747881;transform:scaleX(0.9264);">Người gửi: Tôi</span>
<svg style="position:absolute;left:1165.70px;top:400.30px;" width="20.5" height="20.5" viewBox="0 0 21 21"><circle cx="10.5" cy="10.5" r="9.7" fill="none" stroke="#2a4bf3" stroke-width="1" stroke-dasharray="2.1 1.7"/><path d="M10.5 6.8V14.2M6.8 10.5H14.2" stroke="#2a4bf3" stroke-width="1.1"/></svg>
<span class="t" style="left:1395.50px;top:400.70px;font-size:11.5px;line-height:16px;color:#33363c;transform:scaleX(0.9659);">Chờ tôi ký</span>
<span class="t" style="left:1496.00px;top:401.00px;font-size:11px;line-height:16px;color:#33363c;transform:scaleX(0.9479);">0/1</span>
<div style="position:absolute;left:1395.00px;top:418.90px;width:116.00px;height:3.60px;background:#e1e6ee;border-radius:2px;"></div>
<span class="t" style="left:1539.50px;top:395.00px;font-size:11px;line-height:16px;color:#26282e;transform:scaleX(1.0079);">16/04/2026</span>
<span class="t" style="left:1539.50px;top:411.10px;font-size:11px;line-height:16px;color:#26282e;transform:scaleX(0.9223);">10:18:45</span>
<div style="position:absolute;left:1799.00px;top:399.00px;width:82.30px;height:23.00px;background:#2a4bf3;border-radius:5px;box-shadow:0 0 0 0.5px #6f86f5;"></div>
<span class="t" style="left:1819.80px;top:402.70px;font-size:11.2px;line-height:16px;font-weight:bold;color:#fff;transform:scaleX(0.9373);">Ký ngay</span>
<svg style="position:absolute;left:1894.20px;top:408.70px;" width="14.8" height="3.4" viewBox="0 0 14.8 3.4"><circle cx="1.7" cy="1.7" r="1.5" fill="#50545c"/><circle cx="7.4" cy="1.7" r="1.5" fill="#50545c"/><circle cx="13.1" cy="1.7" r="1.5" fill="#50545c"/></svg>
<div style="position:absolute;left:208.00px;top:492.00px;width:1712.00px;height:1.00px;background:#d9dce4;"></div>
<div style="position:absolute;left:181.00px;top:457.00px;width:16.00px;height:16.00px;border:1.2px solid #6f737a;border-radius:3.5px;background:#fff;"></div>
<div style="position:absolute;left:221.00px;top:453.00px;width:22.00px;height:22.00px;background:#4f7cf7;border-radius:50%;"></div>
<svg style="position:absolute;left:227.50px;top:458.80px;" width="9" height="10.5" viewBox="0 0 9 10.5"><path d="M1.2 0.4H5.6L8.6 3.4V9.4C8.6 9.8 8.3 10.1 7.9 10.1H1.2C0.8 10.1 0.5 9.8 0.5 9.4V1.1C0.5 0.7 0.8 0.4 1.2 0.4Z" fill="#fff"/><path d="M5.9 0.9V3.1H8.1Z" fill="#4f7cf7"/></svg>
<span class="t" style="left:252.80px;top:445.10px;font-size:11.8px;line-height:16px;font-weight:bold;color:#1f2229;transform:scaleX(0.8741);">Phòng KDHAN1_Danh sách công việc sơ đồ GANTT</span>
<span class="t" style="left:252.80px;top:465.60px;font-size:9.8px;line-height:14px;color:#747881;transform:scaleX(0.9264);">Người gửi: Tôi</span>
<svg style="position:absolute;left:1165.70px;top:454.70px;" width="20.5" height="20.5" viewBox="0 0 21 21"><circle cx="10.5" cy="10.5" r="9.7" fill="none" stroke="#2a4bf3" stroke-width="1" stroke-dasharray="2.1 1.7"/><path d="M10.5 6.8V14.2M6.8 10.5H14.2" stroke="#2a4bf3" stroke-width="1.1"/></svg>
<span class="t" style="left:1395.50px;top:455.10px;font-size:11.5px;line-height:16px;color:#33363c;transform:scaleX(0.9659);">Chờ tôi ký</span>
<span class="t" style="left:1494.20px;top:455.40px;font-size:11px;line-height:16px;color:#33363c;transform:scaleX(1.0656);">0/2</span>
<div style="position:absolute;left:1395.00px;top:473.30px;width:116.00px;height:3.60px;background:#e1e6ee;border-radius:2px;"></div>
<span class="t" style="left:1539.50px;top:449.40px;font-size:11px;line-height:16px;color:#26282e;transform:scaleX(1.0079);">15/04/2026</span>
<span class="t" style="left:1539.50px;top:465.50px;font-size:11px;line-height:16px;color:#26282e;transform:scaleX(0.9877);">20:26:38</span>
<div style="position:absolute;left:1799.00px;top:453.00px;width:82.30px;height:24.00px;background:#2a4bf3;border-radius:5px;box-shadow:0 0 0 0.5px #6f86f5;"></div>
<span class="t" style="left:1819.80px;top:457.10px;font-size:11.2px;line-height:16px;font-weight:bold;color:#fff;transform:scaleX(0.9373);">Ký ngay</span>
<svg style="position:absolute;left:1894.20px;top:462.70px;" width="14.8" height="3.4" viewBox="0 0 14.8 3.4"><circle cx="1.7" cy="1.7" r="1.5" fill="#50545c"/><circle cx="7.4" cy="1.7" r="1.5" fill="#50545c"/><circle cx="13.1" cy="1.7" r="1.5" fill="#50545c"/></svg>
<div style="position:absolute;left:1907.00px;top:445.00px;width:13.00px;height:26.00px;background:#1a73e8;border-radius:3px 0 0 3px;"></div>
<svg style="position:absolute;left:1910.30px;top:454.60px;" width="6" height="8.4" viewBox="0 0 6 8.4"><path d="M5 0.8L1.4 4.2L5 7.6" fill="none" stroke="#fff" stroke-width="1.4"/></svg>
<!-- footer -->
<div style="position:absolute;left:167.00px;top:879.00px;width:1753.00px;height:1.00px;background:#d3d7de;"></div>
<span class="t" style="left:183.30px;top:891.30px;font-size:11.2px;line-height:16px;color:#2a2d34;transform:scaleX(0.9943);">Hiển thị 1-6 trên 6 kết quả</span>
<div style="position:absolute;left:1686.20px;top:886.00px;width:24.50px;height:26.00px;border:1px solid #d3d7de;border-radius:3px;background:#fff;"></div>
<div style="position:absolute;left:1714.20px;top:886.00px;width:25.50px;height:26.00px;border:1px solid #d3d7de;border-radius:3px;background:#fff;"></div>
<div style="position:absolute;left:1743.00px;top:886.00px;width:25.50px;height:26.00px;border:1px solid #d3d7de;border-radius:3px;background:#fff;"></div>
<svg style="position:absolute;left:1696.50px;top:894.50px;" width="5" height="9" viewBox="0 0 5 9"><path d="M4.2 0.8L0.9 4.5L4.2 8.2" fill="none" stroke="#c3c6cc" stroke-width="1"/></svg>
<span class="t" style="left:1724.60px;top:891.30px;font-size:11.2px;line-height:16px;color:#1f2229;transform:scaleX(0.7378);">1</span>
<svg style="position:absolute;left:1753.00px;top:894.20px;" width="5" height="9" viewBox="0 0 5 9"><path d="M0.8 0.8L4.1 4.5L0.8 8.2" fill="none" stroke="#c3c6cc" stroke-width="1"/></svg>
<div style="position:absolute;left:1772.00px;top:886.00px;width:128.00px;height:26.00px;border:1px solid #d3d7de;border-radius:3px;background:#fff;"></div>
<span class="t" style="left:1781.00px;top:891.30px;font-size:11.2px;line-height:16px;color:#1f2229;transform:scaleX(1.0258);">20 / trang</span>
<svg style="position:absolute;left:1881.70px;top:896.60px;" width="8.4" height="4.7" viewBox="0 0 8 4.4"><path d="M0.2 0.1H7.8L4 4.3Z" fill="#3a3d44"/></svg>
<!-- filter popup -->
<div style="position:absolute;left:534.00px;top:132.00px;width:256.00px;height:748.00px;background:#fff;box-shadow:0 1px 8px rgba(0,0,0,.13),0 0 2px rgba(0,0,0,.07),0 3px 5px rgba(0,0,0,.07);border-radius:2px;"></div>
<span class="t" style="left:553.30px;top:151.20px;font-size:15px;line-height:20px;font-weight:bold;color:#141b2d;transform:scaleX(0.8678);">Lọc tài liệu</span>
<svg style="position:absolute;left:754.10px;top:154.40px;" width="12" height="12" viewBox="0 0 12 12"><path d="M0.8 0.8L11.2 11.2M11.2 0.8L0.8 11.2" stroke="#1f2229" stroke-width="1.3"/></svg>
<span class="t" style="left:553.30px;top:186.00px;font-size:11.8px;line-height:16px;color:#1f2229;transform:scaleX(0.9885);">Loại tài liệu</span>
<div style="position:absolute;left:553.00px;top:210.00px;width:217.00px;height:32.00px;border:1px solid #d8dadf;border-radius:3px;background:#fff;"></div>
<span class="t" style="left:562.00px;top:218.20px;font-size:11.2px;line-height:16px;color:#7f8186;transform:scaleX(1.0514);">-- Không chọn --</span>
<svg style="position:absolute;left:752.10px;top:223.80px;" width="8.4" height="4.7" viewBox="0 0 8 4.4"><path d="M0.2 0.1H7.8L4 4.3Z" fill="#4a4e60"/></svg>
<span class="t" style="left:553.30px;top:255.80px;font-size:11.8px;line-height:16px;color:#1f2229;transform:scaleX(0.9494);">Thẻ</span>
<div style="position:absolute;left:553.00px;top:279.00px;width:217.00px;height:34.00px;border:1px solid #d8dadf;border-radius:3px;background:#fff;"></div>
<span class="t" style="left:566.80px;top:288.20px;font-size:11.2px;line-height:16px;color:#7f8186;transform:scaleX(1.0514);">-- Không chọn --</span>
<svg style="position:absolute;left:749.50px;top:293.40px;" width="8" height="5.5" viewBox="0 0 8 5.5"><path d="M0.7 0.8L4 4.3L7.3 0.8" fill="none" stroke="#3a3d44" stroke-width="1.25"/></svg>
<span class="t" style="left:553.30px;top:327.20px;font-size:11.8px;line-height:16px;color:#1f2229;transform:scaleX(0.9964);">Trạng thái</span>
<div style="position:absolute;left:553.00px;top:350.00px;width:217.00px;height:32.00px;border:1px solid #d8dadf;border-radius:5px;background:#fff;"></div>
<span class="t" style="left:563.80px;top:359.20px;font-size:11.2px;line-height:16px;color:#2a2d34;transform:scaleX(0.9391);">Tất cả</span>
<svg style="position:absolute;left:749.50px;top:364.40px;" width="8" height="5.5" viewBox="0 0 8 5.5"><path d="M0.7 0.8L4 4.3L7.3 0.8" fill="none" stroke="#3a3d44" stroke-width="1.25"/></svg>
<span class="t" style="left:553.30px;top:396.20px;font-size:11.8px;line-height:16px;color:#1f2229;transform:scaleX(1.0097);">Loại hợp đồng chứng thực</span>
<div style="position:absolute;left:553.00px;top:419.00px;width:217.00px;height:32.00px;border:1px solid #d8dadf;border-radius:5px;background:#fff;"></div>
<span class="t" style="left:563.80px;top:428.20px;font-size:11.2px;line-height:16px;color:#2a2d34;transform:scaleX(0.9391);">Tất cả</span>
<svg style="position:absolute;left:749.50px;top:433.40px;" width="8" height="5.5" viewBox="0 0 8 5.5"><path d="M0.7 0.8L4 4.3L7.3 0.8" fill="none" stroke="#3a3d44" stroke-width="1.25"/></svg>
<span class="t" style="left:553.30px;top:465.00px;font-size:11.8px;line-height:16px;color:#1f2229;transform:scaleX(1.0098);">Trạng thái chứng thực</span>
<div style="position:absolute;left:553.00px;top:488.00px;width:217.00px;height:32.00px;border:1px solid #d8dadf;border-radius:5px;background:#fff;"></div>
<span class="t" style="left:563.80px;top:497.20px;font-size:11.2px;line-height:16px;color:#2a2d34;transform:scaleX(0.9391);">Tất cả</span>
<svg style="position:absolute;left:749.50px;top:502.40px;" width="8" height="5.5" viewBox="0 0 8 5.5"><path d="M0.7 0.8L4 4.3L7.3 0.8" fill="none" stroke="#3a3d44" stroke-width="1.25"/></svg>
<span class="t" style="left:553.30px;top:534.00px;font-size:11.8px;line-height:16px;color:#1f2229;transform:scaleX(0.9731);">Thời hạn ký</span>
<div style="position:absolute;left:553.00px;top:558.00px;width:217.00px;height:32.00px;border:1px solid #d8dadf;border-radius:5px;background:#fff;"></div>
<span class="t" style="left:563.80px;top:567.20px;font-size:11.2px;line-height:16px;color:#2a2d34;transform:scaleX(0.9391);">Tất cả</span>
<svg style="position:absolute;left:749.50px;top:572.40px;" width="8" height="5.5" viewBox="0 0 8 5.5"><path d="M0.7 0.8L4 4.3L7.3 0.8" fill="none" stroke="#3a3d44" stroke-width="1.25"/></svg>
<span class="t" style="left:553.30px;top:603.00px;font-size:11.8px;line-height:16px;color:#1f2229;transform:scaleX(1.0025);">Thời gian cập nhật</span>
<div style="position:absolute;left:553.00px;top:627.00px;width:217.00px;height:32.00px;border:1px solid #d8dadf;border-radius:5px;background:#fff;"></div>
<span class="t" style="left:563.80px;top:636.20px;font-size:11.2px;line-height:16px;color:#2a2d34;transform:scaleX(0.9391);">Tất cả</span>
<svg style="position:absolute;left:749.50px;top:641.40px;" width="8" height="5.5" viewBox="0 0 8 5.5"><path d="M0.7 0.8L4 4.3L7.3 0.8" fill="none" stroke="#3a3d44" stroke-width="1.25"/></svg>
<span class="t" style="left:553.30px;top:673.00px;font-size:11.8px;line-height:16px;color:#1f2229;transform:scaleX(1.0145);">Nguồn tài liệu</span>
<div style="position:absolute;left:553.00px;top:696.00px;width:217.00px;height:34.00px;border:1px solid #d8dadf;border-radius:3px;background:#fff;"></div>
<span class="t" style="left:563.80px;top:705.20px;font-size:11.2px;line-height:16px;color:#2a2d34;transform:scaleX(0.9391);">Tất cả</span>
<svg style="position:absolute;left:741.50px;top:710.40px;" width="8" height="5.5" viewBox="0 0 8 5.5"><path d="M0.7 0.8L4 4.3L7.3 0.8" fill="none" stroke="#3a3d44" stroke-width="1.25"/></svg>
<span class="t" style="left:553.30px;top:744.20px;font-size:11.8px;line-height:16px;color:#1f2229;transform:scaleX(1.0234);">Mức độ quan trọng tài liệu</span>
<div style="position:absolute;left:553.20px;top:767.20px;width:95.80px;height:29.60px;background:#efefef;border-radius:3px;"></div>
<svg style="position:absolute;left:568.60px;top:777.60px;" width="6.6" height="9" viewBox="0 0 6.6 9"><path d="M0.6 0.3H6V8.8L3.3 7L0.6 8.8Z" fill="#939396"/></svg>
<span class="t" style="left:578.50px;top:774.60px;font-size:11.2px;line-height:16px;color:#8e8e91;transform:scaleX(1.0235);">Quan trọng</span>
<div style="position:absolute;left:655.20px;top:767.20px;width:84.80px;height:29.60px;background:#efefef;border-radius:3px;"></div>
<svg style="position:absolute;left:669.80px;top:776.80px;" width="9" height="10.6" viewBox="0 0 9 10.6"><path d="M5.8 0.1L0.3 6.1H3.9L2.9 10.5L8.8 4.1H5.1Z" fill="#939396"/></svg>
<span class="t" style="left:681.20px;top:774.60px;font-size:11.2px;line-height:16px;color:#8e8e91;transform:scaleX(0.9792);">Khẩn cấp</span>
<span class="t" style="left:610.50px;top:836.80px;font-size:11px;line-height:16px;font-weight:bold;color:#2e50f3;transform:scaleX(0.9368);">Bỏ lọc</span>
<div style="position:absolute;left:675.00px;top:829.00px;width:94.00px;height:30.00px;background:#2a4bf3;border-radius:3px;"></div>
<span class="t" style="left:700.50px;top:836.80px;font-size:11px;line-height:16px;font-weight:bold;color:#fff;transform:scaleX(0.9863);">Áp dụng</span>
</body>
</html>
